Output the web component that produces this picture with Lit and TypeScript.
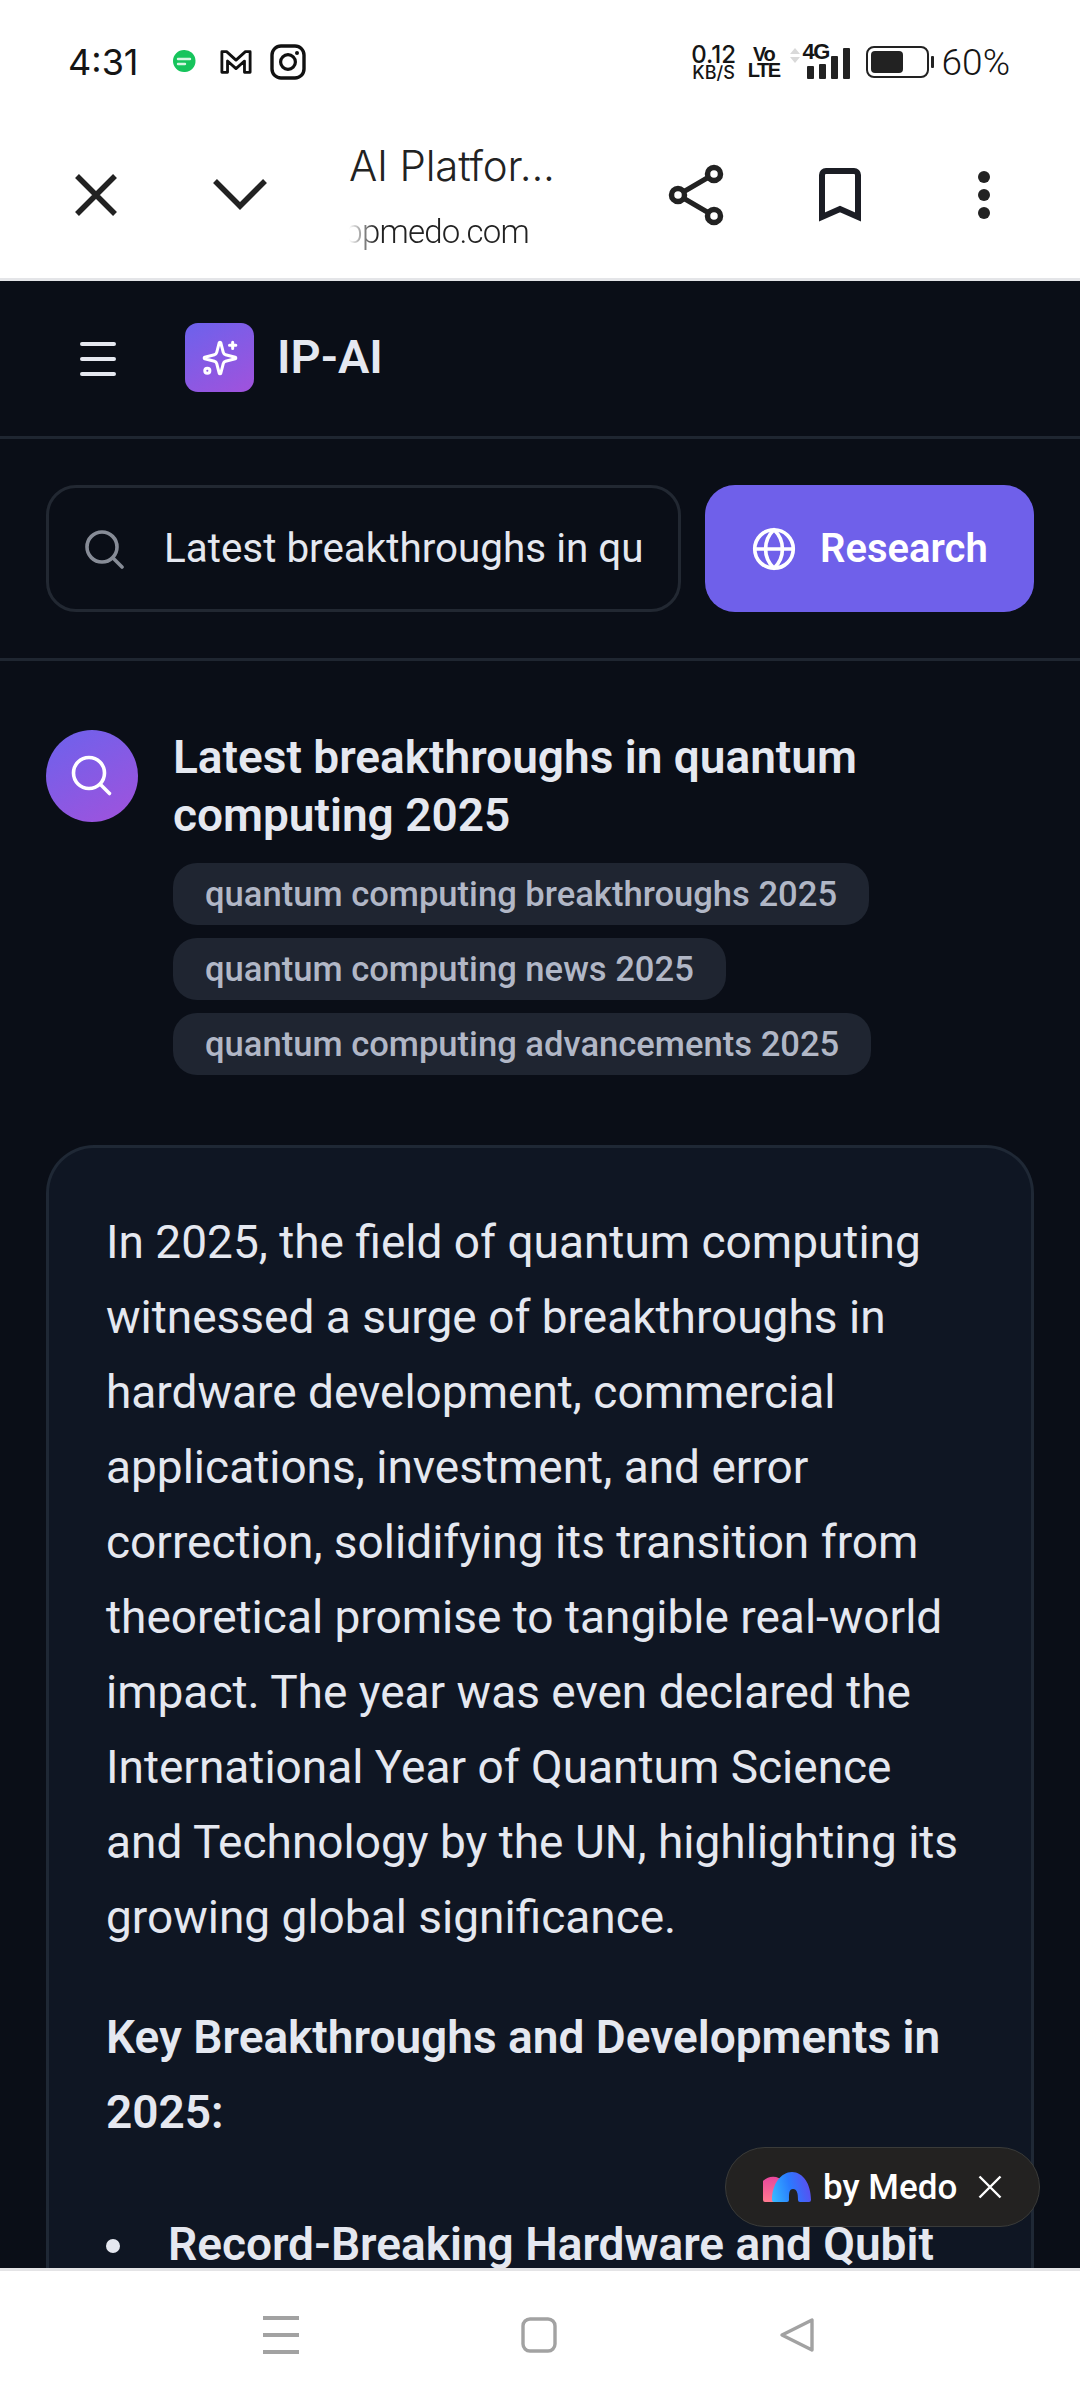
import { LitElement, html, css } from 'lit';

const PARAGRAPH =
  'In 2025, the field of quantum computing witnessed a surge of breakthroughs in hardware development, commercial applications, investment, and error correction, solidifying its transition from theoretical promise to tangible real-world impact. The year was even declared the International Year of Quantum Science and Technology by the UN, highlighting its growing global significance.';

const CHIPS = [
  'quantum computing breakthroughs 2025',
  'quantum computing news 2025',
  'quantum computing advancements 2025',
];

class AppRoot extends LitElement {
  static styles = css`
    :host {
      display: flex;
      flex-direction: column;
      width: 1080px;
      height: 2400px;
      overflow: hidden;
      background: #fff;
      font-family: Roboto, 'Noto Sans', sans-serif;
    }
    svg {
      display: block;
      flex: none;
    }

    /* phone status bar */
    .status {
      height: 124px;
      flex: none;
      display: flex;
      align-items: center;
      padding: 0 70px 0 68px;
      color: #151515;
      font-family: Inter, Roboto, sans-serif;
    }
    .time {
      font-size: 36px;
      margin-right: 33px;
    }
    .notif {
      display: flex;
      align-items: center;
      gap: 18px;
    }
    .green {
      margin-right: 6px;
    }
    .status-right {
      margin-left: auto;
      display: flex;
      align-items: center;
    }
    .speed {
      display: flex;
      flex-direction: column;
      align-items: center;
      font-size: 24px;
      font-weight: 500;
      line-height: 20px;
      width: 44px;
      margin-right: 16px;
    }
    .speed small {
      font-size: 18px;
      line-height: 15px;
    }
    .volte {
      display: flex;
      flex-direction: column;
      align-items: center;
      font-family: 'Liberation Sans', sans-serif;
      font-weight: 700;
      font-size: 20px;
      letter-spacing: -1.5px;
      line-height: 16px;
      width: 24px;
      margin-right: 13px;
    }
    .signal {
      margin-right: 15px;
    }
    .signal-wrap {
      position: relative;
    }
    .net {
      position: absolute;
      left: 14px;
      top: -4px;
      font-family: 'Liberation Sans', sans-serif;
      font-weight: 700;
      font-size: 22px;
      line-height: 22px;
      letter-spacing: -1.5px;
    }
    .percent {
      font-family: Roboto, sans-serif;
      font-size: 37px;
      font-weight: 300;
      margin-left: 8px;
    }

    /* browser toolbar */
    .toolbar {
      height: 154px;
      flex: none;
      display: grid;
      grid-template-columns: 144px 144px 312px 144px 144px 144px;
      padding-left: 24px;
      align-items: center;
      justify-items: center;
      color: #222;
      border-bottom: 3px solid #e4e5e8;
    }
    .toolbar > svg {
      margin-bottom: 12px;
    }
    .page-title {
      justify-self: start;
      width: 180px;
      margin-left: 37px;
      font-family: Inter, Roboto, sans-serif;
      font-weight: 300;
    }
    .page-name {
      font-size: 42px;
      line-height: 56px;
      white-space: nowrap;
      letter-spacing: -0.2px;
      margin-top: -12px;
    }
    .page-url {
      font-family: Roboto, sans-serif;
      font-size: 33px;
      line-height: 40px;
      margin-top: 18px;
      letter-spacing: -0.8px;
      overflow: hidden;
      display: flex;
      justify-content: flex-end;
      white-space: nowrap;
      -webkit-mask-image: linear-gradient(90deg, transparent 0, #000 28px);
      mask-image: linear-gradient(90deg, transparent 0, #000 28px);
    }

    /* web page */
    .page {
      flex: 1;
      min-height: 0;
      position: relative;
      overflow: hidden;
      background: #0a0e17;
      color: #e5e8f0;
    }
    .app-header {
      height: 158px;
      box-sizing: border-box;
      border-bottom: 3px solid #1f2631;
      display: flex;
      align-items: center;
      padding-left: 80px;
    }
    .logo {
      width: 69px;
      height: 69px;
      border-radius: 13px;
      margin: -2px 0 0 69px;
      display: flex;
      align-items: center;
      justify-content: center;
      background: linear-gradient(150deg, #6c62ec, #a152dc);
    }
    .brand {
      font-size: 47px;
      font-weight: 600;
      margin: -5px 0 0 23px;
    }
    .search-row {
      display: flex;
      gap: 24px;
      padding: 46px;
      height: 222px;
      box-sizing: border-box;
      border-bottom: 3px solid #1f2631;
    }
    .search-box {
      width: 635px;
      box-sizing: border-box;
      border: 3px solid #222832;
      border-radius: 30px;
      display: flex;
      align-items: center;
      padding-left: 35px;
      overflow: hidden;
    }
    .search-text {
      font-size: 40.4px;
      margin-left: 40px;
      white-space: nowrap;
    }
    .research {
      width: 329px;
      border-radius: 30px;
      background: #6f60ea;
      color: #fff;
      display: flex;
      align-items: center;
      padding-left: 47px;
      box-sizing: border-box;
      gap: 24px;
      font-size: 40px;
      font-weight: 600;
    }
    .results {
      padding: 69px 46px 0;
    }
    .query {
      display: flex;
      gap: 35px;
    }
    .avatar {
      width: 92px;
      height: 92px;
      flex: none;
      border-radius: 50%;
      display: flex;
      align-items: center;
      justify-content: center;
      background: linear-gradient(150deg, #6c62ec, #a152dc);
    }
    .query-title {
      font-size: 46px;
      font-weight: 600;
      line-height: 58px;
      margin-top: -2px;
    }
    .chips {
      display: flex;
      flex-direction: column;
      align-items: flex-start;
      gap: 13px;
      margin-top: 19px;
    }
    .chip {
      height: 62px;
      display: flex;
      align-items: center;
      padding: 0 32px;
      border-radius: 24px;
      background: #1f2531;
      color: #b1b7c6;
      font-size: 34.6px;
      font-weight: 500;
    }
    .card {
      margin-top: 70px;
      border: 3px solid #1f2835;
      border-bottom: 0;
      border-radius: 48px 48px 0 0;
      background: #0f1623;
      padding: 57px 57px 0;
      font-size: 46px;
      line-height: 75px;
    }
    .card p {
      margin: 0 0 45px;
    }
    .card strong {
      font-weight: 600;
    }
    .card ul {
      margin: 57px 0 0;
      padding: 0;
      list-style: none;
    }
    .card li {
      position: relative;
      padding-left: 62px;
      font-weight: 600;
    }
    .card li::before {
      content: '';
      position: absolute;
      left: 0;
      top: 32px;
      width: 14px;
      height: 14px;
      border-radius: 50%;
      background: #e5e8f0;
    }
    .medo {
      position: absolute;
      right: 40px;
      bottom: 41px;
      width: 315px;
      height: 80px;
      box-sizing: border-box;
      border: 1px solid #3a3b39;
      border-radius: 40px;
      background: #232221;
      color: #fff;
      display: flex;
      align-items: center;
      padding-left: 37px;
      font-size: 35px;
      font-weight: 500;
    }
    .medo span {
      margin: 0 21px 0 12px;
    }

    /* android navigation */
    .navbar {
      height: 132px;
      flex: none;
      box-sizing: border-box;
      border-top: 3px solid #e4e4e6;
      display: flex;
      align-items: center;
      justify-content: center;
      gap: 222px;
      padding-bottom: 1px;
      margin-left: -2px;
    }
  `;

  render() {
    return html`
      <div class="status">
        <div class="time">4:31</div>
        <div class="notif">
          <svg class="green" width="24" height="26" viewBox="0 0 24 26">
            <path fill="#16c45c" d="M12 1a11 11 0 1 0 0 22h1l0 0a11 11 0 0 0-1-22z" />
            <path stroke="#d5f5e1" stroke-width="2.4" stroke-linecap="round" d="M6 10h12M6 15h7" />
          </svg>
          <svg width="32" height="28" viewBox="0 0 34 28">
            <path fill="none" stroke="#111" stroke-width="3" stroke-linejoin="round"
              d="M2 3h5l10 9 10-9h5v22h-6V13l-9 8-9-8v12H2z" />
          </svg>
          <svg width="36" height="36" viewBox="0 0 36 36">
            <rect x="2" y="2" width="32" height="32" rx="9" fill="none" stroke="#111" stroke-width="3.4" />
            <circle cx="18" cy="18" r="7.4" fill="none" stroke="#111" stroke-width="3.2" />
            <circle cx="27" cy="9" r="2" fill="#111" />
          </svg>
        </div>
        <div class="status-right">
          <div class="speed">0.12<small>KB/S</small></div>
          <div class="volte"><span>Vo</span><span>LTE</span></div>
          <div class="signal-wrap signal">
            <svg width="62" height="34" viewBox="0 0 62 34">
              <path fill="#d9d9d9" d="M1 9l5-6 5 6zM1 12l5 6 5-6z" />
              <rect x="18" y="21" width="7" height="13" rx="1" fill="#222" />
              <rect x="30" y="19" width="7" height="15" rx="1" fill="#222" />
              <rect x="42" y="11" width="7" height="23" rx="1" fill="#222" />
              <rect x="54" y="3" width="7" height="31" rx="1" fill="#222" />
            </svg>
            <div class="net">4G</div>
          </div>
          <svg width="68" height="32" viewBox="0 0 68 32">
            <rect x="1" y="1" width="61" height="30" rx="7" fill="none" stroke="#222" stroke-width="2" />
            <rect x="5" y="5" width="32" height="22" rx="4" fill="#222" />
            <rect x="65" y="10" width="3" height="12" rx="1" fill="#222" />
          </svg>
          <div class="percent">60%</div>
        </div>
      </div>

      <div class="toolbar">
        <svg width="42" height="42" viewBox="0 0 42 42">
          <path stroke="#222" stroke-width="5.5" d="M2 2l38 38M40 2L2 40" />
        </svg>
        <svg width="54" height="32" viewBox="0 0 54 32">
          <path fill="none" stroke="#222" stroke-width="5.5" d="M2 2l25 25L52 2" />
        </svg>
        <div class="page-title">
          <div class="page-name">AI Platfor...</div>
          <div class="page-url"><span>appmedo.com</span></div>
        </div>
        <svg width="56" height="62" viewBox="0 0 56 62">
          <path fill="none" stroke="#222" stroke-width="5" d="M46 10L10 31l36 21" />
          <g fill="#fff" stroke="#222" stroke-width="5.5">
            <circle cx="46" cy="10" r="6.5" />
            <circle cx="10" cy="31" r="6.5" />
            <circle cx="46" cy="52" r="6.5" />
          </g>
        </svg>
        <svg width="42" height="54" viewBox="0 0 42 54">
          <path fill="none" stroke="#1b1d24" stroke-width="6"
            d="M3 49V7a4 4 0 0 1 4-4h28a4 4 0 0 1 4 4v42L21 41z" />
        </svg>
        <svg width="12" height="48" viewBox="0 0 12 48" fill="#222">
          <circle cx="6" cy="6" r="6" />
          <circle cx="6" cy="24" r="6" />
          <circle cx="6" cy="42" r="6" />
        </svg>
      </div>

      <div class="page">
        <div class="app-header">
          <svg width="36" height="34" viewBox="0 0 36 34">
            <path stroke="#e5e8f0" stroke-width="4" stroke-linecap="round" d="M2 2h32M2 17h32M2 32h32" />
          </svg>
          <div class="logo">
            <svg width="38" height="38" viewBox="0 0 24 24" fill="none" stroke="#fff" stroke-width="1.9"
              stroke-linecap="round" stroke-linejoin="round">
              <path d="M9.937 15.5A2 2 0 0 0 8.5 14.063l-6.135-1.582a.5.5 0 0 1 0-.962L8.5 9.936A2 2 0 0 0 9.937 8.5l1.582-6.135a.5.5 0 0 1 .963 0L14.063 8.5A2 2 0 0 0 15.5 9.937l6.135 1.581a.5.5 0 0 1 0 .964L15.5 14.063a2 2 0 0 0-1.437 1.437l-1.582 6.135a.5.5 0 0 1-.963 0z" />
              <path d="M20 2v4M22 4h-4" />
              <circle cx="4" cy="20" r="1.6" />
            </svg>
          </div>
          <div class="brand">IP-AI</div>
        </div>

        <div class="search-row">
          <div class="search-box">
            <svg width="40" height="40" viewBox="0 0 40 40" fill="none" stroke="#878c97" stroke-width="3.6"
              stroke-linecap="round">
              <circle cx="18" cy="18" r="15" />
              <path d="M29 29l9 9" />
            </svg>
            <div class="search-text">Latest breakthroughs in qu</div>
          </div>
          <div class="research">
            <svg width="44" height="44" viewBox="0 0 24 24" fill="none" stroke="#fff" stroke-width="2"
              stroke-linecap="round" stroke-linejoin="round">
              <circle cx="12" cy="12" r="10.5" />
              <path d="M1.5 12h21M12 1.5c3.2 3 4.6 6.6 4.6 10.5S15.200 19.500 12 22.500C8.800 19.500 7.400 15.900 7.400 12S8.800 4.500 12 1.500z" />
            </svg>
            Research
          </div>
        </div>

        <div class="results">
          <div class="query">
            <div class="avatar">
              <svg width="42" height="42" viewBox="0 0 42 42" fill="none" stroke="#fff" stroke-width="3.6"
                stroke-linecap="round">
                <circle cx="18" cy="18" r="15.500" />
                <path d="M29.500 29.500l9 9" />
              </svg>
            </div>
            <div>
              <div class="query-title">Latest breakthroughs in quantum computing 2025</div>
              <div class="chips">
                ${CHIPS.map((c) => html`<div class="chip">${c}</div>`)}
              </div>
            </div>
          </div>

          <div class="card">
            <p>${PARAGRAPH}</p>
            <strong>Key Breakthroughs and Developments in 2025:</strong>
            <ul>
              <li>Record-Breaking Hardware and Qubit</li>
            </ul>
          </div>
        </div>

        <div class="medo">
          <svg width="48" height="30" viewBox="0 0 48 30">
            <defs>
              <linearGradient id="medo-a" x1="0" y1="0.8" x2="1" y2="0.6">
                <stop offset="0" stop-color="#35b8ff" />
                <stop offset="0.5" stop-color="#2a7bff" />
                <stop offset="1" stop-color="#5a4ff0" />
              </linearGradient>
              <linearGradient id="medo-b" x1="0" y1="0" x2="0" y2="1">
                <stop offset="0" stop-color="#e8479c" />
                <stop offset="1" stop-color="#ff7a90" />
              </linearGradient>
            </defs>
            <path fill="url(#medo-b)" d="M0 28a12 12 0 0 1 20-19l-6 21H2a2 2 0 0 1-2-2z" />
            <path fill="url(#medo-a)"
              d="M9 28C9 12 18 0 29 0s19 12 19 28a2 2 0 0 1-2 2H37a2 2 0 0 1-2-2c0-7-1-11-5-11s-4 4-4 11a2 2 0 0 1-2 2H11a2 2 0 0 1-2-2z" />
          </svg>
          <span>by Medo</span>
          <svg width="24" height="24" viewBox="0 0 24 24">
            <path stroke="#fff" stroke-width="2.4" d="M1.500 1.500l21 21M22.500 1.500l-21 21" />
          </svg>
        </div>
      </div>

      <div class="navbar">
        <svg width="36" height="38" viewBox="0 0 36 38">
          <path stroke="#a2a2a2" stroke-width="4" d="M0 2h36M0 19h36M0 36h36" />
        </svg>
        <svg width="36" height="36" viewBox="0 0 36 36">
          <rect x="2" y="2" width="32" height="32" rx="7" fill="none" stroke="#a2a2a2" stroke-width="3.400" />
        </svg>
        <svg width="36" height="36" viewBox="0 0 36 36">
          <path fill="none" stroke="#a2a2a2" stroke-width="3.400" stroke-linejoin="round" d="M33 3v30L3 18z" />
        </svg>
      </div>
    `;
  }
}

customElements.define('app-root', AppRoot);
